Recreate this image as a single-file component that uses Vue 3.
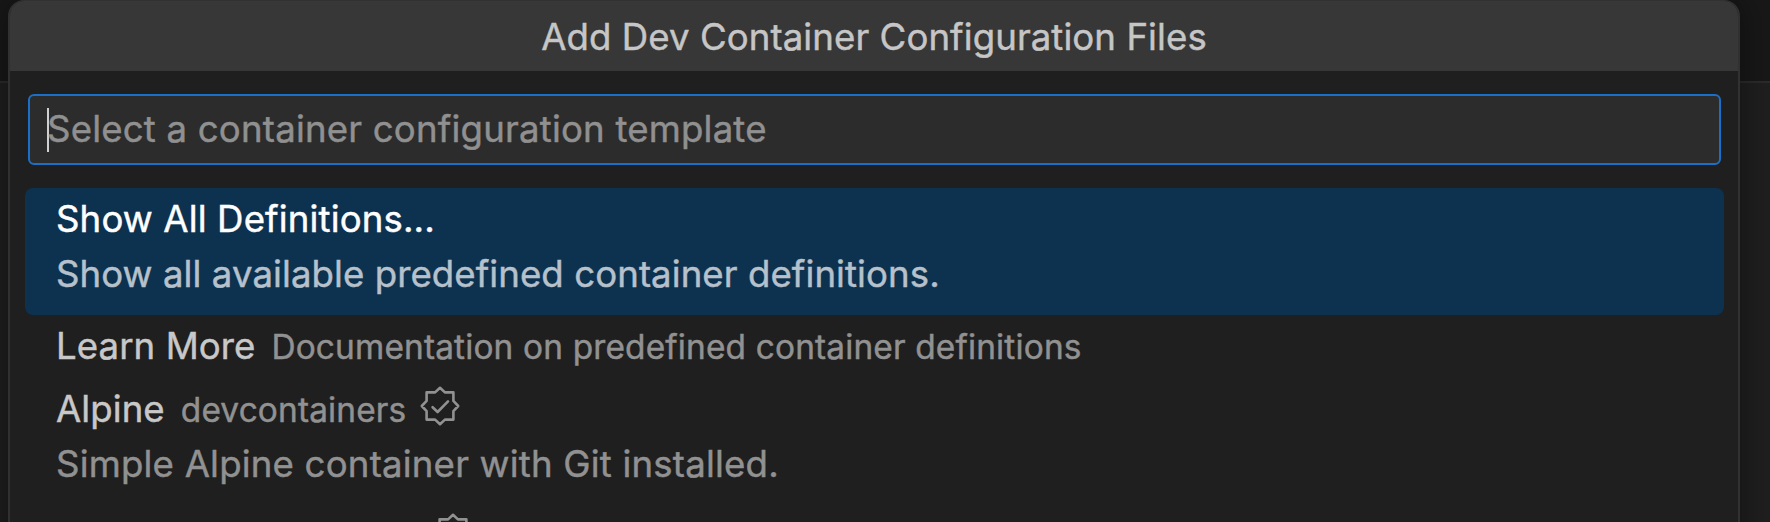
<script setup>
const items = [
  { label: 'Show All Definitions...', detail: 'Show all available predefined container definitions.', active: true },
  { label: 'Learn More', note: 'Documentation on predefined container definitions' },
  { label: 'Alpine', note: 'devcontainers', verified: true, detail: 'Simple Alpine container with Git installed.' },
  { label: 'Debian', note: 'devcontainers', verified: true, detail: 'Simple Debian container with Git installed.' },
]
</script>

<template>
  <div class="page">
    <div class="tabs"></div>
    <div class="dialog">
      <header>Add Dev Container Configuration Files</header>
      <div class="field"><i class="caret"></i><span class="placeholder">Select a container configuration template</span></div>
      <div class="list">
        <div v-for="item in items" :key="item.label" class="row" :class="{ active: item.active, single: !item.detail }">
          <div class="line">
            <span class="label">{{ item.label }}</span>
            <span v-if="item.note" class="note">{{ item.note }}</span>
            <svg v-if="item.verified" class="badge" viewBox="0 0 40 40" fill="none" stroke="currentColor" stroke-width="2.6" stroke-linejoin="round" stroke-linecap="round">
              <path d="M20 1.8 L24.9 6.4 H33.4 V14.9 L38.2 20 L33.4 25.1 V33.6 H24.9 L20 38.2 L15.1 33.6 H6.6 V25.1 L1.8 20 L6.6 14.9 V6.4 H15.1 Z" />
              <path d="M12.6 21.2 L17.6 26 L28 15.4" />
            </svg>
          </div>
          <div v-if="item.detail" class="detail">{{ item.detail }}</div>
        </div>
      </div>
    </div>
  </div>
</template>

<style scoped>
.page {
  position: relative;
  width: 1770px;
  height: 522px;
  overflow: hidden;
  background: #1f1f1f;
  font-family: Inter, "Liberation Sans", sans-serif;
  font-size: 36.6px;
  letter-spacing: 0.08px;
  -webkit-text-stroke: 0.45px currentColor;
  white-space: nowrap;
}
.tabs {
  position: absolute;
  inset: 0 0 auto;
  height: 81px;
  background: #181818;
  border-bottom: 2px solid #2b2b2b;
}
.dialog {
  position: relative;
  box-sizing: border-box;
  width: 1732px;
  height: 640px;
  margin-left: 8px;
  border: 2px solid #313131;
  border-top-width: 1px;
  border-radius: 16px;
  background: #1f1f1f;
  box-shadow: 0 0 32px 4px rgba(0, 0, 0, 0.36);
  overflow: hidden;
}
header {
  height: 70px;
  line-height: 72px;
  background: #373737;
  color: #c6c6c6;
  text-align: center;
}
.field {
  display: flex;
  align-items: center;
  box-sizing: border-box;
  height: 71px;
  margin: 23px 17px 23px 18px;
  padding-left: 17px;
  border: 2px solid #1a6fc9;
  border-radius: 6px;
  background: #2c2c2c;
  color: #909090;
}
.caret {
  width: 2px;
  height: 44px;
  margin-right: -2px;
  background: #d0d0d0;
}
.placeholder {
  line-height: 44px;
  margin-top: -1px;
  letter-spacing: 0.2px;
}
.list {
  margin: 0 14px 0 15px;
}
.row {
  box-sizing: border-box;
  height: 127px;
  padding: 5px 0 0 31px;
  border-radius: 8px;
}
.row.single {
  height: 63px;
}
.row.active {
  background: #0d3250;
}
.line {
  display: flex;
  align-items: baseline;
  height: 54px;
  line-height: 52px;
}
.label {
  color: #c8c8c8;
}
.note {
  margin-left: 16px;
  color: #919191;
  font-size: 33.4px;
  letter-spacing: 0.16px;
}
.badge {
  align-self: flex-start;
  width: 40px;
  height: 40px;
  margin: 3px 0 0 14px;
  color: #919191;
}
.row:last-child .line {
  line-height: 54px;
}
.detail {
  line-height: 54px;
  color: #919191;
  letter-spacing: 0.2px;
}
.active .label {
  color: #fff;
  letter-spacing: 0.14px;
}
.active .detail {
  color: #b6c1cb;
  letter-spacing: 0.08px;
}
</style>
